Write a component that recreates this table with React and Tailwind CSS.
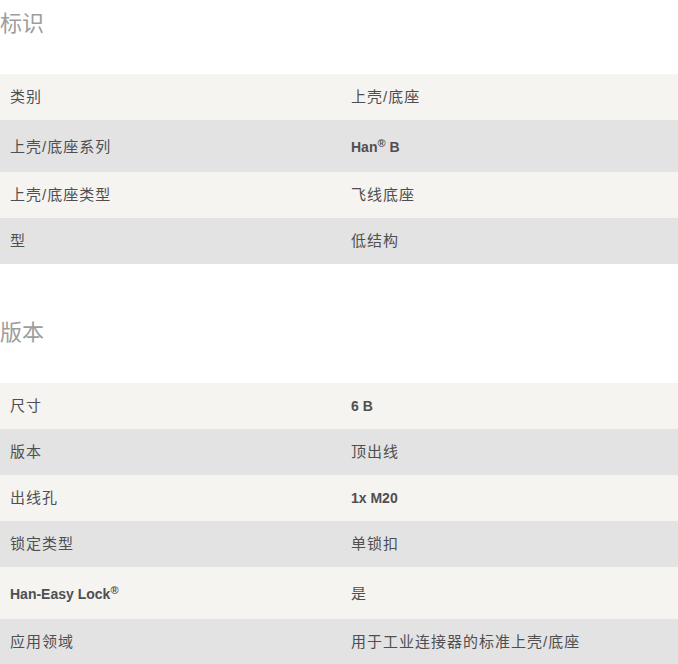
const font = {
  fontFamily: '"Liberation Sans", Arial, "Noto Sans CJK SC", sans-serif',
};

function Reg() {
  return <sup className="text-[11px] font-bold">®</sup>;
}

function B({ children }) {
  return <b className="text-[14px] tracking-normal">{children}</b>;
}

const sections = [
  {
    title: "标识",
    rows: [
      { label: "类别", value: "上壳/底座" },
      { label: "上壳/底座系列", value: <B>Han<Reg /> B</B>, tall: true },
      { label: "上壳/底座类型", value: "飞线底座" },
      { label: "型", value: "低结构" },
    ],
  },
  {
    title: "版本",
    rows: [
      { label: "尺寸", value: <B>6 B</B> },
      { label: "版本", value: "顶出线" },
      { label: "出线孔", value: <B>1x M20</B> },
      { label: "锁定类型", value: "单锁扣" },
      { label: <B>Han-Easy Lock<Reg /></B>, value: "是", tall: true },
      { label: "应用领域", value: "用于工业连接器的标准上壳/底座" },
    ],
  },
];

export default function App() {
  return (
    <div className="w-[678px] bg-white text-[15px] tracking-[1px] text-[#4f4f52]" style={font}>
      {sections.map((s, i) => (
        <section key={s.title} className={i === 0 ? "pt-[9px]" : "mt-[54px]"}>
          {/* Section title */}
          <h2 className="text-[22px] leading-[30px] tracking-normal text-[#9d9d9d] mb-[35px]">
            {s.title}
          </h2>

          {/* Rows */}
          <div>
            {s.rows.map((r, j) => (
              <div
                key={j}
                className={`grid grid-cols-[341px_1fr] leading-[18px] ${
                  j % 2 === 0 ? "bg-[#f5f4f0]" : "bg-[#e3e3e3]"
                } ${r.tall ? "pt-[18px] pb-[16px]" : "py-[14px]"}`}
              >
                <div className="pl-[10px]">{r.label}</div>
                <div className="pl-[10px]">{r.value}</div>
              </div>
            ))}
          </div>
        </section>
      ))}
    </div>
  );
}
